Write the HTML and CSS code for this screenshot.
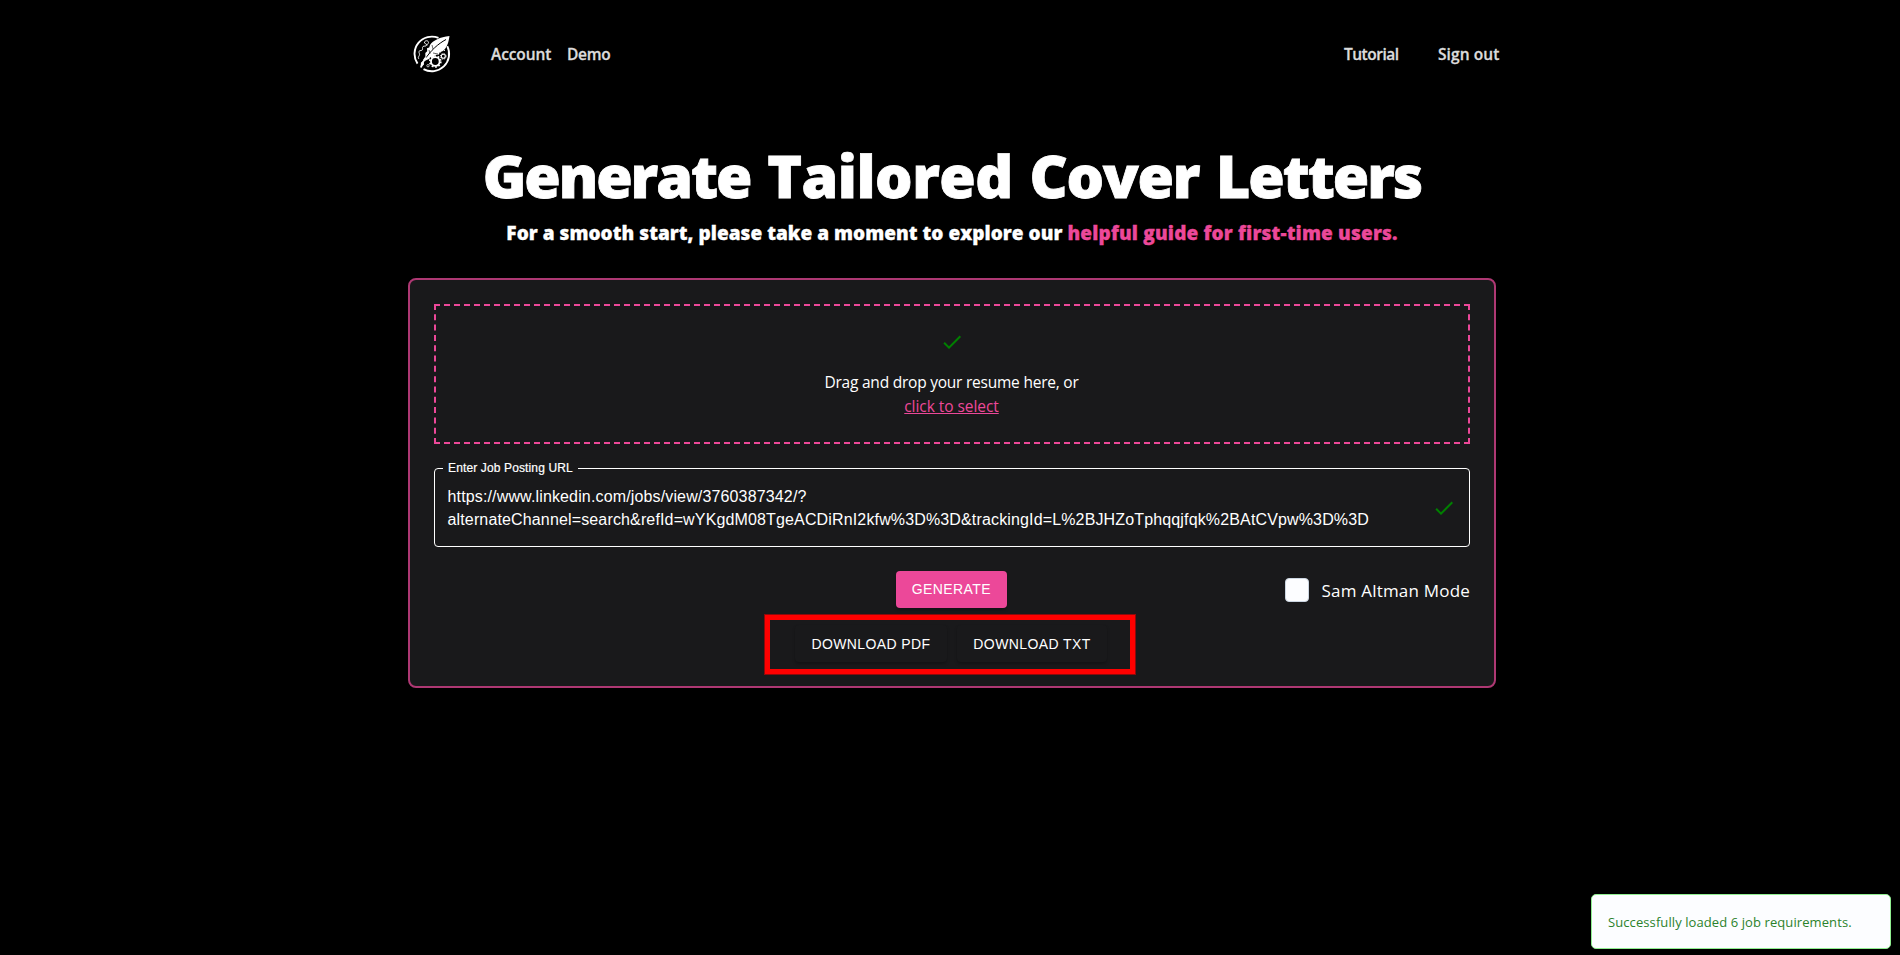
FILE: index.html
```html
<!DOCTYPE html>
<html lang="en">
<head>
<meta charset="utf-8">
<title>Generate Tailored Cover Letters</title>
<link rel="stylesheet" href="styles.css">
</head>
<body>
<div class="page">
  <nav class="nav">
    <svg class="logo" viewBox="0 0 38 38" fill="none" stroke="#fff">
      <path d="M25.500 2.960A17.300 17.300 0 0 0 4.500 28.600" stroke-width="1.900"/>
      <path d="M34.300 11.200A17.300 17.300 0 0 1 10.500 34.100" stroke-width="1.900"/>
      <path d="M36.500 1C27 2 20 5.500 17 10l-.8 2.500-2.200.8.200 3-1.900 1.700.1 3.500L10 25l2 .7 4.500-2 .5-1.500 4-.2 1-2 4-.6.5-1.800 3.500-1.600C34 12.500 35.500 8 36.500 1z" fill="#fff" stroke="none"/>
      <path d="M33 4.500C25 9 18 15 11.500 25" stroke="#000" stroke-width="1"/>
      <path d="M19 10l1 4M16 15l1 4M25 19l-5-1" stroke="#000" stroke-width=".6"/>
      <path d="M13.500 22.500L10 27l-2 5.500" stroke-width="1.700"/>
      <path d="M10.500 26l-2.500 1.500-.5 5 3.500-3z" fill="#fff" stroke="none"/>
      <path d="M6 24c-2-2 1-3 .5-5S5 16 8 15.500s.5-3 2-4 3 .5 3.500-1.500-3-1-2-3 4-1.500 4 .5-2 1.500-1.500 3" stroke-width=".9"/>
      <circle cx="22.300" cy="26.500" r="4.300" stroke-width="1.800"/>
      <circle cx="22.300" cy="26.500" r="5.500" stroke-width="1.700" stroke-dasharray="1.750 1.706"/>
      <circle cx="30.300" cy="21.300" r="2" stroke-width="1.100"/>
      <circle cx="30.300" cy="21.300" r="2.900" stroke-width=".9" stroke-dasharray="1.100 1.177"/>
      <circle cx="15" cy="30.700" r="1.200" stroke-width=".7"/>
      <path d="M27 17h1M31 15.500h1" stroke-width=".9"/>
    </svg>
    <a class="link account">Account</a>
    <a class="link demo">Demo</a>
    <span class="spacer"></span>
    <a class="link tutorial">Tutorial</a>
    <a class="link signout">Sign out</a>
  </nav>

  <main>
    <h1 class="title"><span class="tight">Generate</span> <span class="loose">Tailored</span> Cover <span class="tight">Letters</span></h1>
    <p class="subtitle">For a smooth start, please take a moment to explore our <a class="guide">helpful guide for first-time users.</a></p>

    <section class="card">
      <div class="dropzone">
        <svg class="check" viewBox="0 0 24 24"><path d="M9 16.170 4.830 12l-1.420 1.410L9 19 21 7l-1.410-1.410z"/></svg>
        <p class="drop-text">Drag and drop your resume here, or</p>
        <a class="drop-link">click to select</a>
      </div>

      <fieldset class="field">
        <legend class="label">Enter Job Posting URL</legend>
        <div class="field-row">
          <div class="url">https://www.linkedin.com/jobs/view/3760387342/?<br>alternateChannel=search&amp;refId=wYKgdM08TgeACDiRnI2kfw%3D%3D&amp;trackingId=L%2BJHZoTphqqjfqk%2BAtCVpw%3D%3D</div>
          <svg class="check" viewBox="0 0 24 24"><path d="M9 16.170 4.830 12l-1.420 1.410L9 19 21 7l-1.410-1.410z"/></svg>
        </div>
      </fieldset>

      <div class="actions">
        <button class="btn generate">GENERATE</button>
        <label class="mode"><span class="box"></span><span class="mode-text">Sam Altman Mode</span></label>
      </div>

      <div class="downloads">
        <button class="btn download pdf">DOWNLOAD PDF</button>
        <button class="btn download txt">DOWNLOAD TXT</button>
      </div>
    </section>
  </main>
</div>
<div class="toast"><span class="toast-text">Successfully loaded 6 job requirements.</span></div>
</body>
</html>
```
FILE: styles.css
```css
* { box-sizing: border-box; margin: 0; padding: 0; }
body {
  height: 955px;
  overflow: hidden;
  background: #000;
  color: #fff;
  font-family: "Open Sans", "Noto Sans", sans-serif;
}
.page { width: 1096px; margin-left: 408px; }

.nav { display: flex; align-items: center; height: 108px; padding-left: 5px; }
.logo { width: 38px; height: 38px; margin-right: 40px; }
.link { font-size: 15.500px; font-weight: 650; color: #dcdcdc; white-space: nowrap; -webkit-text-stroke: .3px #dcdcdc; }
.account { width: 76px; letter-spacing: -.1px; }
.demo { letter-spacing: -.3px; }
.spacer { flex: 1; }
.tutorial { width: 94px; letter-spacing: -.500px; }
.signout { width: 66px; letter-spacing: .1px; }

.title {
  width: 1088px;
  margin-top: 32px;
  font-size: 59px;
  line-height: 70px;
  font-weight: 800;
  letter-spacing: -1.250px;
  word-spacing: 2.600px;
  text-align: center;
  white-space: nowrap;
  -webkit-text-stroke: .8px #fff;
}
.tight { letter-spacing: -2.050px; }
.loose { letter-spacing: -.500px; }
.subtitle {
  width: 1088px;
  margin-top: 7px;
  font-size: 19px;
  line-height: 32px;
  font-weight: 800;
  letter-spacing: .040px;
  text-align: center;
  white-space: nowrap;
  -webkit-text-stroke: .3px currentColor;
}
.guide { color: #ec4899; letter-spacing: .170px; }

.card {
  width: 1088px;
  height: 410px;
  margin-top: 29px;
  padding: 24px;
  border: 2px solid #ae3873;
  border-radius: 8px;
  background: #19191b;
}
.dropzone {
  display: flex;
  flex-direction: column;
  align-items: center;
  height: 140px;
  padding-top: 24px;
  border: 2px dashed #ec4899;
  font-size: 15.500px;
  line-height: 24px;
}
.check { width: 24px; height: 24px; fill: #008000; flex: none; }
.drop-text { margin: 16px 1px 0 0; letter-spacing: -.230px; }
.drop-link { margin-right: 1px; color: #ec4899; text-decoration: underline; letter-spacing: -.060px; }

.field {
  height: 86px;
  margin-top: 17px;
  padding: 0 13px 0 8px;
  border: 1px solid #fff;
  border-radius: 4px;
  font-family: "Liberation Sans", Arial, sans-serif;
}
.label { padding: 0 5px; font-size: 12px; line-height: 14px; letter-spacing: .130px; -webkit-text-stroke: .2px #fff; }
.field-row { display: flex; justify-content: space-between; padding: 10px 0 0 4.500px; }
.field-row .check { margin-top: 11px; }
.url { font-size: 16px; line-height: 23px; letter-spacing: .145px; white-space: nowrap; }

.actions {
  display: grid;
  grid-template-columns: 1fr 111px 1fr;
  align-items: start;
  margin-top: 24px;
}
.btn {
  height: 37px;
  border: 0;
  border-radius: 4px;
  color: #fff;
  font-family: "Liberation Sans", Arial, sans-serif;
  font-size: 14px;
  line-height: 24px;
  letter-spacing: .4px;
  box-shadow: 0 2px 3px rgba(0, 0, 0, .25);
}
.generate { grid-column: 2; width: 111px; margin-left: -.600px; padding-bottom: 2px; background: #ec4899; }
.mode { display: flex; justify-content: flex-end; align-items: center; gap: 12px; height: 37px; }
.box { width: 24px; height: 24px; border: 1px solid #cbd5e1; border-radius: 4px; background: #fcfdff; }
.mode-text { padding-top: 1px; font-size: 17px; letter-spacing: .200px; white-space: nowrap; }

.downloads {
  display: flex;
  justify-content: center;
  gap: 10px;
  width: 372px;
  height: 61px;
  margin: 6px 0 0 330px;
  padding: 5px 0 0 2px;
  border: 6px solid #f00;
  outline: 1px solid #8c0a0b;
  outline-offset: -1px;
}
.download { background: #19191b; }
.pdf { width: 152px; }
.txt { width: 150px; }

.toast {
  position: absolute;
  left: 1591px;
  top: 894px;
  display: flex;
  align-items: center;
  width: 300px;
  height: 55px;
  padding-left: 16px;
  border: 1px solid #90ee90;
  border-radius: 5px;
  background: #fcfdff;
  color: #2b822b;
}
.toast-text { font-size: 13px; letter-spacing: .090px; white-space: nowrap; }
```
